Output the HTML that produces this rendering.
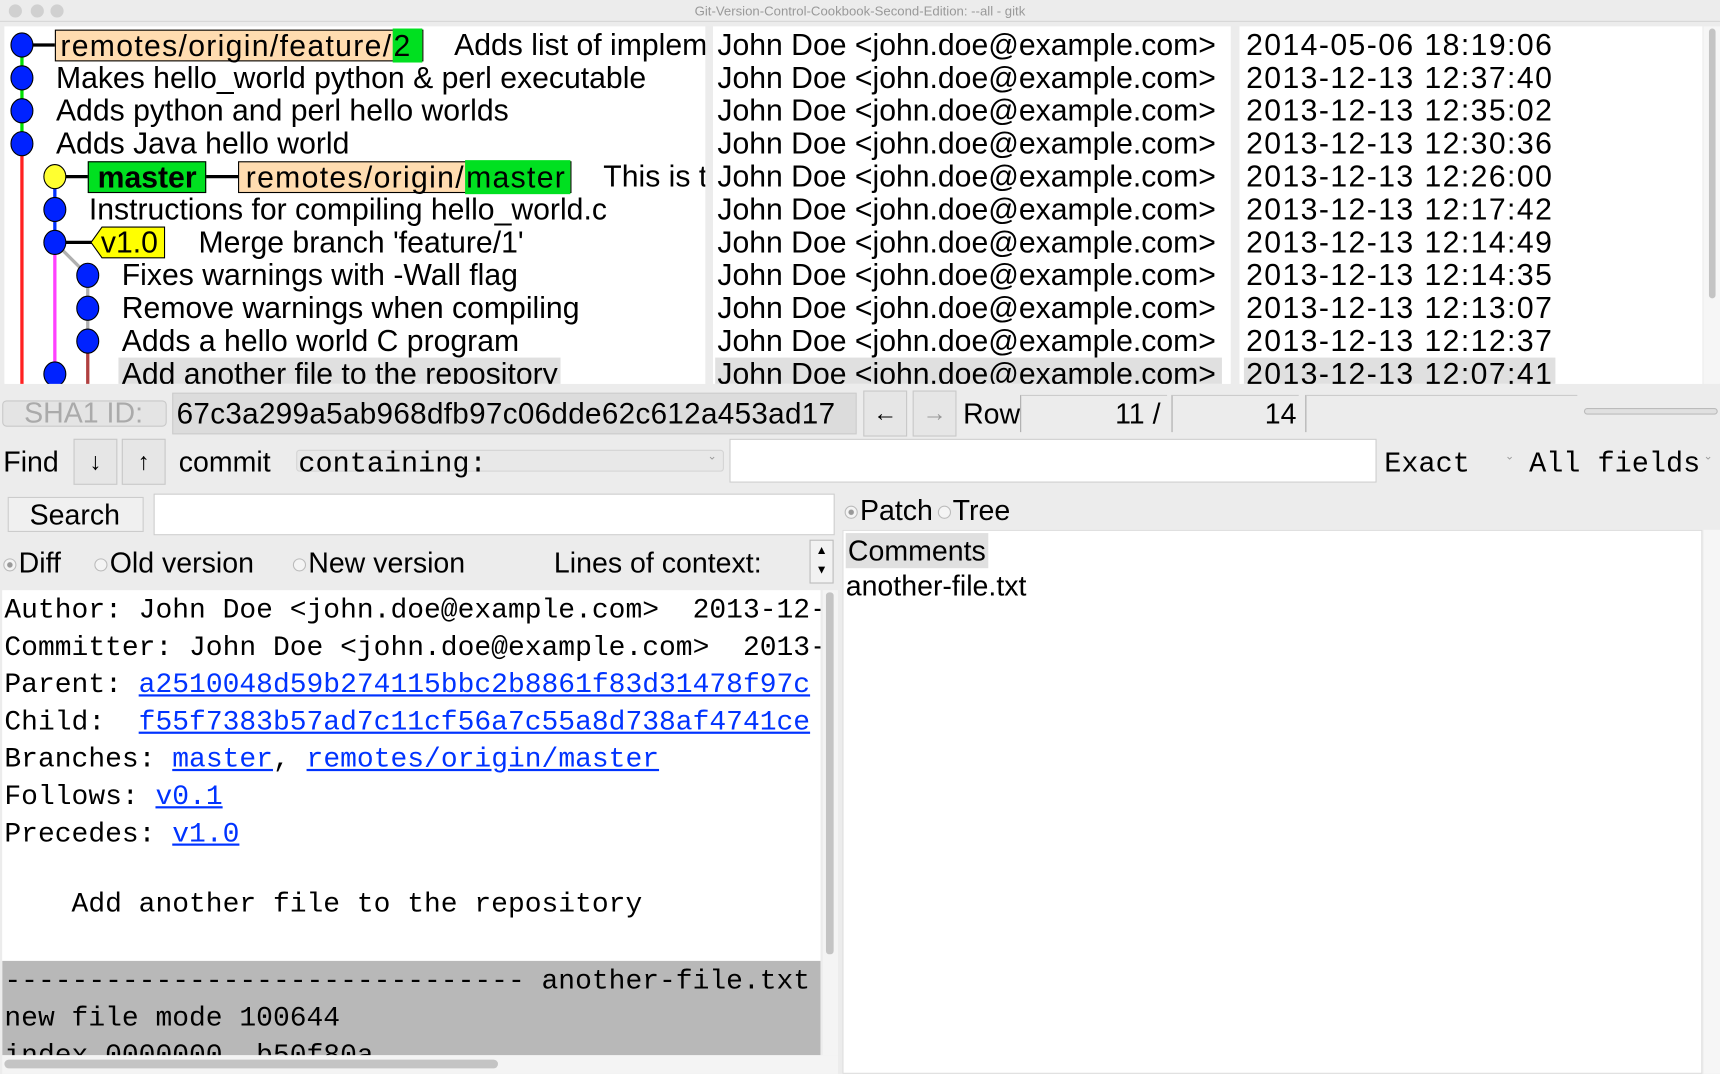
<!DOCTYPE html>
<html><head><meta charset="utf-8"><style>
*{margin:0;padding:0;box-sizing:border-box}
body{width:1720px;height:1074px;overflow:hidden;background:#ececec;font-family:"Liberation Sans",sans-serif}
#w{position:absolute;left:0;top:0;width:1568px;height:979px;transform:scale(1.0969);transform-origin:0 0;background:#ececec}
.a{position:absolute;white-space:nowrap}
.s{font-size:26px;color:#000}
.m{font-family:"Liberation Mono",monospace;font-size:25.5px;white-space:pre}
.row{position:absolute;height:30px;line-height:30px;font-size:27.5px;white-space:nowrap}
.d .row{letter-spacing:1.3px}
.tag{letter-spacing:1.2px}
a{color:#0033ff;text-decoration:underline}
.box{position:absolute;background:#fff}
.btn{position:absolute;background:#e6e6e6;border:1px solid #c8c8c8}
.rad{display:inline-block;width:12px;height:12px;border:1px solid #bbb;border-radius:50%;background:#f4f4f4;vertical-align:middle;margin-right:2px}
</style></head><body><div id="w">
<div class="a" style="left:0;top:0;width:1568px;height:20px;background:#ececec;border-bottom:1px solid #d6d6d6"></div>
<div class="a" style="left:8px;top:4px;width:12px;height:12px;border-radius:6px;background:#d0d0d0"></div>
<div class="a" style="left:28px;top:4px;width:12px;height:12px;border-radius:6px;background:#d0d0d0"></div>
<div class="a" style="left:46px;top:4px;width:12px;height:12px;border-radius:6px;background:#d0d0d0"></div>
<div class="a" style="left:0;top:3px;width:1568px;text-align:center;font-size:12px;color:#999">Git-Version-Control-Cookbook-Second-Edition: --all - gitk</div>

<div class="box" style="left:4px;top:24px;width:639px;height:326px;overflow:hidden">
<svg width="643" height="350" style="position:absolute;left:-4px;top:-24px" viewBox="0 0 643 350">
<line x1="20" y1="41" x2="20" y2="131" stroke="#00e000" stroke-width="3"/>
<line x1="20" y1="131" x2="20" y2="360" stroke="#ff2020" stroke-width="3"/>
<line x1="50" y1="161" x2="50" y2="221" stroke="#0030ff" stroke-width="3"/>
<line x1="50" y1="221" x2="50" y2="341" stroke="#ff40ff" stroke-width="3"/>
<line x1="50" y1="221" x2="80" y2="251" stroke="#b0b0b0" stroke-width="3"/>
<line x1="80" y1="251" x2="80" y2="311" stroke="#b0b0b0" stroke-width="3"/>
<line x1="80" y1="311" x2="80" y2="360" stroke="#b04040" stroke-width="3"/>
<line x1="20" y1="41" x2="52" y2="41" stroke="#000" stroke-width="3"/>
<line x1="50" y1="161" x2="220" y2="161" stroke="#000" stroke-width="3"/>
<line x1="50" y1="221" x2="85" y2="221" stroke="#000" stroke-width="3"/>
<g fill="#0022ff" stroke="#000" stroke-width="1">
<ellipse cx="20" cy="41" rx="10" ry="11"/><ellipse cx="20" cy="71" rx="10" ry="11"/><ellipse cx="20" cy="101" rx="10" ry="11"/><ellipse cx="20" cy="131" rx="10" ry="11"/>
<ellipse cx="50" cy="191" rx="10" ry="11"/><ellipse cx="50" cy="221" rx="10" ry="11"/>
<ellipse cx="80" cy="251" rx="10" ry="11"/><ellipse cx="80" cy="281" rx="10" ry="11"/><ellipse cx="80" cy="311" rx="10" ry="11"/><ellipse cx="50" cy="341" rx="10" ry="11"/>
</g>
<ellipse cx="50" cy="161" rx="10" ry="11" fill="#ffff30" stroke="#000"/>
<polygon points="83,221 93,207 150,207 150,235 93,235" fill="#ffff00" stroke="#000" stroke-width="1"/>
</svg>
<div class="row tag" style="left:46px;top:3px;height:29px;border:1px solid #000;background:#ffdcb0;padding:0 4px 0 4px;line-height:27px">remotes/origin/feature/<span style="background:#00e020;padding:0 10px 0 1px;margin-right:-4px">2</span></div>
<div class="row" style="left:410px;top:2px">Adds list of implementations</div>
<div class="row" style="left:47px;top:32px">Makes hello_world python &amp; perl executable</div>
<div class="row" style="left:47px;top:62px">Adds python and perl hello worlds</div>
<div class="row" style="left:47px;top:92px">Adds Java hello world</div>
<div class="row" style="left:76px;top:123px;height:29px;border:1px solid #000;background:#00e020;padding:0 8px;font-weight:bold;line-height:27px">master</div>
<div class="row tag" style="left:213px;top:123px;height:29px;border:1px solid #000;background:#ffdcb0;padding:0 0 0 6px;line-height:27px">remotes/origin/<span style="background:#00e020;padding:0 4px 0 1px">master</span></div>
<div class="row" style="left:546px;top:122px">This is the master branch</div>
<div class="row" style="left:77px;top:152px">Instructions for compiling hello_world.c</div>
<div class="row" style="left:88px;top:182px">v1.0</div>
<div class="row" style="left:177px;top:182px">Merge branch 'feature/1'</div>
<div class="row" style="left:107px;top:212px">Fixes warnings with -Wall flag</div>
<div class="row" style="left:107px;top:242px">Remove warnings when compiling</div>
<div class="row" style="left:107px;top:272px">Adds a hello world C program</div>
<div class="row" style="left:104px;top:302px;background:#e0e0e0;padding:0 3px">Add another file to the repository</div>
</div>

<div class="box" style="left:650px;top:24px;width:472px;height:326px;overflow:hidden">
<div class="row" style="left:4px;top:2px">John Doe &lt;john.doe@example.com&gt;</div>
<div class="row" style="left:4px;top:32px">John Doe &lt;john.doe@example.com&gt;</div>
<div class="row" style="left:4px;top:62px">John Doe &lt;john.doe@example.com&gt;</div>
<div class="row" style="left:4px;top:92px">John Doe &lt;john.doe@example.com&gt;</div>
<div class="row" style="left:4px;top:122px">John Doe &lt;john.doe@example.com&gt;</div>
<div class="row" style="left:4px;top:152px">John Doe &lt;john.doe@example.com&gt;</div>
<div class="row" style="left:4px;top:182px">John Doe &lt;john.doe@example.com&gt;</div>
<div class="row" style="left:4px;top:212px">John Doe &lt;john.doe@example.com&gt;</div>
<div class="row" style="left:4px;top:242px">John Doe &lt;john.doe@example.com&gt;</div>
<div class="row" style="left:4px;top:272px">John Doe &lt;john.doe@example.com&gt;</div>
<div class="row" style="left:2px;top:302px;background:#e0e0e0;padding:0 2px;width:462px">John Doe &lt;john.doe@example.com&gt;</div>
</div>

<div class="box d" style="left:1130px;top:24px;width:422px;height:326px;overflow:hidden">
<div class="row" style="left:6px;top:2px">2014-05-06 18:19:06</div>
<div class="row" style="left:6px;top:32px">2013-12-13 12:37:40</div>
<div class="row" style="left:6px;top:62px">2013-12-13 12:35:02</div>
<div class="row" style="left:6px;top:92px">2013-12-13 12:30:36</div>
<div class="row" style="left:6px;top:122px">2013-12-13 12:26:00</div>
<div class="row" style="left:6px;top:152px">2013-12-13 12:17:42</div>
<div class="row" style="left:6px;top:182px">2013-12-13 12:14:49</div>
<div class="row" style="left:6px;top:212px">2013-12-13 12:14:35</div>
<div class="row" style="left:6px;top:242px">2013-12-13 12:13:07</div>
<div class="row" style="left:6px;top:272px">2013-12-13 12:12:37</div>
<div class="row" style="left:4px;top:302px;background:#e0e0e0;padding:0 2px">2013-12-13 12:07:41</div>
</div>
<div class="a" style="left:1553px;top:24px;width:15px;height:326px;background:#f6f6f6"></div>
<div class="a" style="left:1558px;top:26px;width:6px;height:246px;background:#c4c4c4;border-radius:3px"></div>

<div class="btn" style="left:2px;top:365px;width:150px;height:24px;border-radius:4px;background:#e4e4e4"></div>
<div class="a s" style="left:22px;top:360px;color:#aaa;line-height:32px">SHA1 ID:</div>
<div class="a" style="left:157px;top:358px;width:624px;height:38px;background:#dcdcdc;border:1px solid #ccc"></div>
<div class="a s" style="left:161px;top:360px;line-height:34px;font-size:27px;letter-spacing:0.3px">67c3a299a5ab968dfb97c06dde62c612a453ad17</div>
<div class="btn" style="left:787px;top:356px;width:40px;height:42px;text-align:center;font-size:22px;line-height:40px">←</div>
<div class="btn" style="left:832px;top:356px;width:40px;height:42px;text-align:center;font-size:22px;line-height:40px;color:#999">→</div>
<div class="a s" style="left:878px;top:360px;line-height:34px">Row</div>
<div class="a" style="left:930px;top:360px;width:134px;height:34px;border-left:1px solid #aaa;border-top:1px solid #ccc"></div>
<div class="a s" style="left:930px;top:360px;width:128px;text-align:right;line-height:34px">11 /</div>
<div class="a" style="left:1068px;top:360px;width:116px;height:34px;border-left:1px solid #aaa;border-top:1px solid #ccc"></div>
<div class="a s" style="left:1068px;top:360px;width:114px;text-align:right;line-height:34px">14</div>
<div class="a" style="left:1190px;top:360px;width:248px;height:34px;border-left:1px solid #aaa;border-top:1px solid #ccc"></div>
<div class="a" style="left:1444px;top:372px;width:122px;height:6px;border:1px solid #bbb;border-radius:3px;background:#e0e0e0"></div>

<div class="a s" style="left:3px;top:403px;line-height:36px">Find</div>
<div class="btn" style="left:67px;top:400px;width:40px;height:42px;text-align:center;font-size:22px;line-height:40px">↓</div>
<div class="btn" style="left:111px;top:400px;width:40px;height:42px;text-align:center;font-size:22px;line-height:40px">↑</div>
<div class="a s" style="left:163px;top:403px;line-height:36px">commit</div>
<div class="a" style="left:270px;top:410px;width:390px;height:20px;background:#e8e8e8;border:1px solid #d4d4d4;border-radius:3px"></div>
<div class="a m" style="left:272px;top:405px;line-height:36px;font-size:26px">containing:</div>
<div class="a" style="left:645px;top:411px;font-size:10px;color:#999">⌄</div>
<div class="a" style="left:665px;top:400px;width:590px;height:40px;background:#fff;border:1px solid #ccc"></div>
<div class="a m" style="left:1262px;top:405px;line-height:36px;font-size:26px">Exact</div>
<div class="a" style="left:1372px;top:411px;font-size:10px;color:#999">⌄</div>
<div class="a m" style="left:1394px;top:405px;line-height:36px;font-size:26px">All fields</div>
<div class="a" style="left:1553px;top:411px;font-size:10px;color:#999">⌄</div>

<div class="btn" style="left:7px;top:453px;width:124px;height:32px;background:#f0f0f0;border-color:#ccc"></div>
<div class="a s" style="left:27px;top:452px;line-height:34px">Search</div>
<div class="a" style="left:140px;top:450px;width:621px;height:38px;background:#fff;border:1px solid #ccc"></div>
<div class="a s" style="left:770px;top:448px;line-height:34px"><span class="rad" style="background:radial-gradient(#999 30%,#f4f4f4 40%)"></span>Patch<span class="rad" style="margin-left:4px"></span>Tree</div>

<div class="a s" style="left:3px;top:496px;line-height:34px"><span class="rad" style="background:radial-gradient(#999 30%,#f4f4f4 40%)"></span>Diff</div>
<div class="a s" style="left:86px;top:496px;line-height:34px"><span class="rad"></span>Old version</div>
<div class="a s" style="left:267px;top:496px;line-height:34px"><span class="rad"></span>New version</div>
<div class="a s" style="left:505px;top:496px;line-height:34px">Lines of context:</div>
<div class="a" style="left:738px;top:492px;width:22px;height:40px;border:1px solid #bbb;background:#f2f2f2;font-size:11px;text-align:center;line-height:18px">▲<br>▼</div>

<div class="box" style="left:2px;top:538px;width:746px;height:424px;overflow:hidden">
<div class="a m" style="left:2px;top:2px;line-height:34px">Author: John Doe &lt;john.doe@example.com&gt;  2013-12-13 12:07:41
Committer: John Doe &lt;john.doe@example.com&gt;  2013-12-13 12:07:41
Parent: <a>a2510048d59b274115bbc2b8861f83d31478f97c</a>
Child:  <a>f55f7383b57ad7c11cf56a7c55a8d738af4741ce</a>
Branches: <a>master</a>, <a>remotes/origin/master</a>
Follows: <a>v0.1</a>
Precedes: <a>v1.0</a></div>
<div class="a m" style="left:2px;top:270px;line-height:34px">    Add another file to the repository</div>
<div class="a" style="left:0;top:338px;width:746px;height:90px;background:#b8b8b8"></div>
<div class="a m" style="left:2px;top:340px;line-height:34px">------------------------------- another-file.txt
new file mode 100644
index 0000000..b50f80a</div>
</div>
<div class="a" style="left:750px;top:538px;width:14px;height:424px;background:#f4f4f4"></div>
<div class="a" style="left:753px;top:540px;width:7px;height:330px;background:#c4c4c4;border-radius:3px"></div>
<div class="a" style="left:2px;top:962px;width:762px;height:17px;background:#f4f4f4"></div>
<div class="a" style="left:4px;top:966px;width:450px;height:8px;background:#c4c4c4;border-radius:4px"></div>

<div class="box" style="left:768px;top:483px;width:784px;height:496px;border:1px solid #ddd">
<div class="a s" style="left:2px;top:2px;line-height:32px;background:#e0e0e0;padding:0 2px">Comments</div>
<div class="a s" style="left:2px;top:34px;line-height:32px">another-file.txt</div>
</div>
<div class="a" style="left:1553px;top:483px;width:15px;height:496px;background:#f6f6f6"></div>
</div></body></html>
